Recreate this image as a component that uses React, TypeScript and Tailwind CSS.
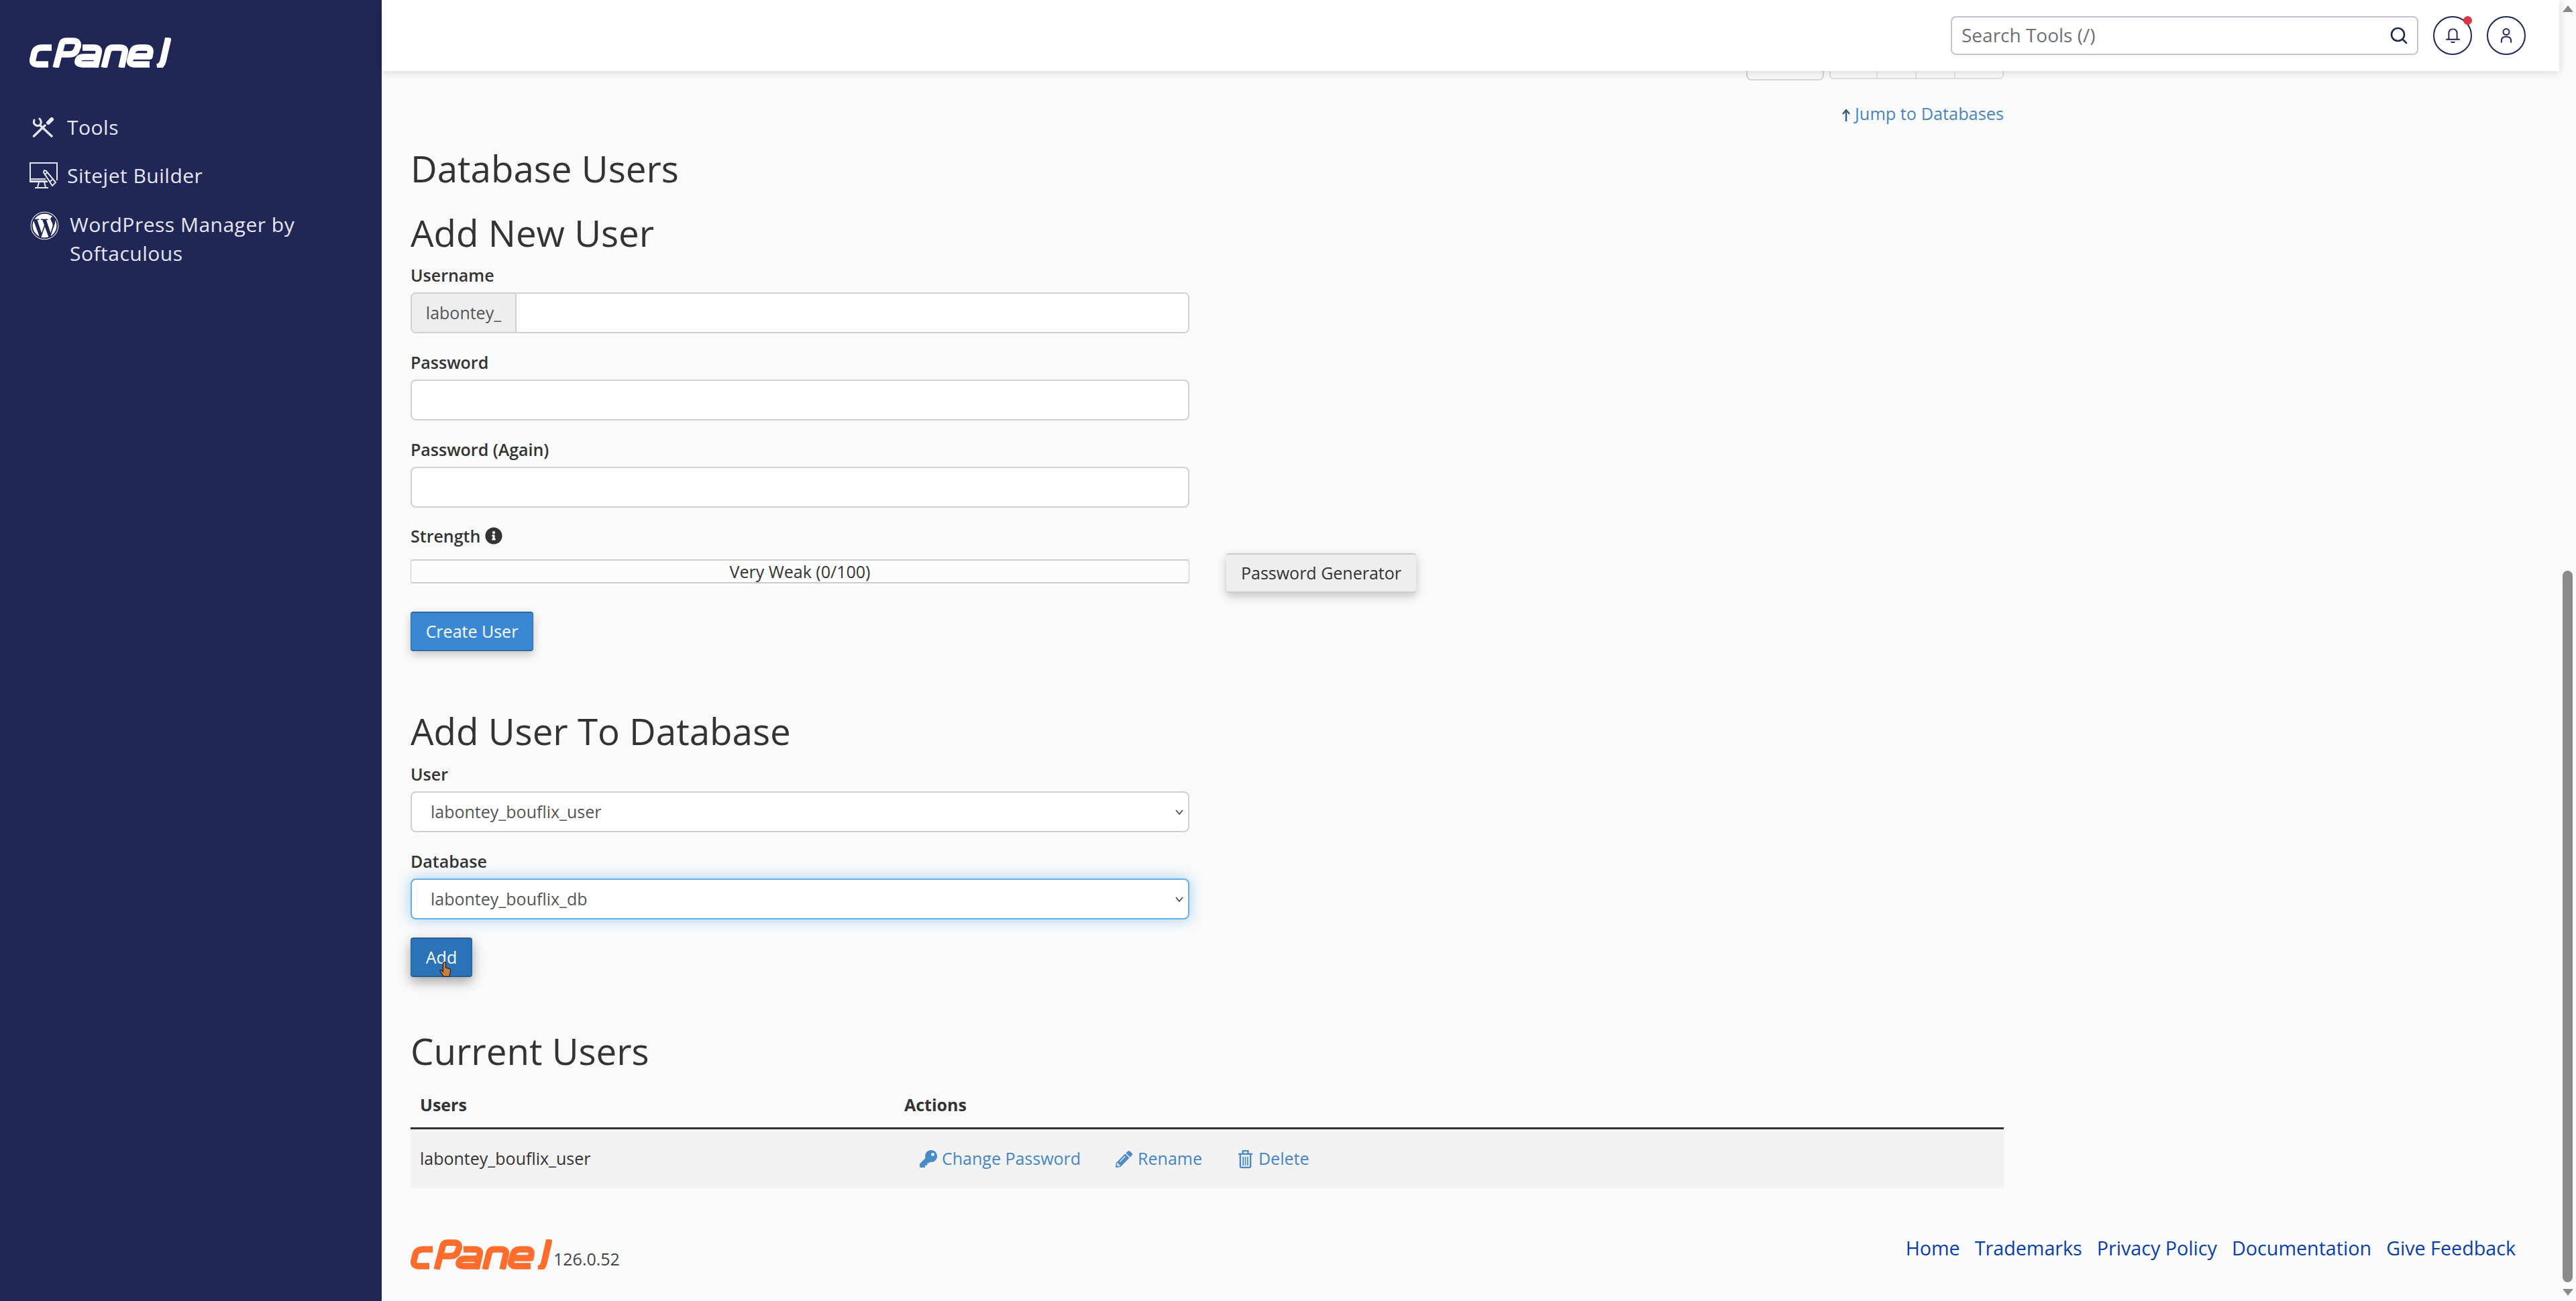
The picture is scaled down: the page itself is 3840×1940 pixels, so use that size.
import React from "react";
import { FaWordpress, FaKey, FaPencilAlt, FaInfoCircle } from "react-icons/fa";

function Logo({ color, className }: { color: string; className?: string }) {
  return (
    <svg viewBox="4 6 211 45" width="211" height="45" className={className} fill="none" stroke={color} strokeWidth="9.5" strokeLinejoin="round">
      <path d="M37 21H23Q13 21 11 29L9 38Q7 46 17 46H32" />
      <path d="M43 51L52 16Q53 11 59 11H69Q78 11 76 20L75 22Q73 31 63 31H51" />
      <path d="M83 21H100Q109 21 107 29L102 51M102 35H85Q77 35 76 41Q75 46 83 46H102" />
      <path d="M115 51L121 27Q122 21 129 21H139Q148 21 146 29L141 51" />
      <path d="M159 34H183L184 28Q185 21 177 21H167Q159 21 157 28L154 39Q152 46 161 46H183" />
      <path d="M211 6L203 41Q201 49 194 50" />
    </svg>
  );
}

function ToolsIcon() {
  return (
    <svg viewBox="0 0 32 30" width="32" height="30" fill="none" stroke="#e6e7f0" strokeWidth="3.4" strokeLinecap="round">
      <path d="M2.500 28L19 12" />
      <path d="M24 8L29 3" strokeWidth="6" />
      <path d="M29 28L13 13" />
      <path d="M3 4Q1 10 6 12Q11 14 13 9Q14 5 11 2" strokeWidth="3" />
    </svg>
  );
}

function SitejetIcon() {
  return (
    <svg viewBox="0 0 42 39" width="42" height="39" fill="none" stroke="#e6e7f0" strokeWidth="2">
      <path d="M27 29H1V1H41V27" />
      <path d="M1 25H24M1 28H26" />
      <path d="M14 30L12 37M22 30L24 37M8 38H28" />
      <path d="M21 15L22 12L25 13L39 30L34 35Z" strokeWidth="2" fill="#202655" />
      <path d="M23 18L27 15M34 26L30 29" />
    </svg>
  );
}

function NavRow({ icon, label }: { icon: React.ReactNode; label: string }) {
  return (
    <div className="flex h-[43px] items-center">
      <div className="flex w-[56px] shrink-0 justify-start">{icon}</div>
      <span>{label}</span>
    </div>
  );
}

function FieldLabel({ children, className = "" }: { children: React.ReactNode; className?: string }) {
  return <div className={`h-[34px] text-[25px] leading-[34px] font-semibold text-[#333] ${className}`}>{children}</div>;
}

const inputClass = "block h-[61px] w-[1161px] rounded-[8px] border-2 border-[#d0d0d0] bg-white";
const selectClass = "block h-[61px] w-[1161px] appearance-none rounded-[8px] border-2 bg-white pl-[28px] pr-[4px] text-[25px] text-[#555] outline-none";
const headingClass = "h-[70px] text-[54.7px] leading-[70px] font-normal text-[#333]";

function Chevron() {
  return (
    <svg viewBox="0 0 12 8" width="12" height="8" className="pointer-events-none absolute right-[9px] top-[27px]" fill="none" stroke="#444" strokeWidth="1.6">
      <path d="M1 1L6 7L11 1" />
    </svg>
  );
}

function TrashIcon() {
  return (
    <svg viewBox="0 0 24 30" width="23" height="29" fill="none" stroke="#4a8ac9" strokeWidth="2.4">
      <path d="M1 7H23" />
      <path d="M8 7V2H16V7" />
      <path d="M4 7V26Q4 28 6 28H18Q20 28 20 26V7" />
      <path d="M8.500 11V25M12 11V25M15.500 11V25" strokeWidth="1.8" />
    </svg>
  );
}

function Cursor() {
  return (
    <svg viewBox="0 0 18 24" width="18" height="24" className="absolute left-[43px] top-[36px]">
      <path d="M7 1Q9 0 9.500 2V9L15 10.500Q17 11 16.500 14L15 22H6L1 14Q1 11.500 3.500 13L5.500 15V2Q5.500 1 7 1Z" fill="#c9803e" stroke="#2a1a10" strokeWidth="1.2" />
    </svg>
  );
}

export default function App() {
  return (
    <div className="flex h-[1940px] w-[3840px] overflow-hidden bg-[#fafafa] font-['Open_Sans',sans-serif] text-[25px] text-[#333]">
      <aside className="flex w-[569px] shrink-0 flex-col bg-[#202655] pl-[44px] pt-[56px] text-[30px] leading-[43px] tracking-[0.5px] text-[#e6e7f0]">
        <Logo color="#ffffff" />
        <div className="mt-[67px]">
          <NavRow icon={<div className="ml-[4px]"><ToolsIcon /></div>} label="Tools" />
        </div>
        <div className="mt-[29px]">
          <NavRow icon={<SitejetIcon />} label="Sitejet Builder" />
        </div>
        <div className="mt-[30px] flex">
          <div className="w-[60px] shrink-0">
            <FaWordpress className="ml-[1px] mt-[2px] h-[43px] w-[43px]" color="#ffffff" />
          </div>
          <div className="w-[400px]">WordPress Manager by<br />Softaculous</div>
        </div>
      </aside>

      <div className="relative flex min-w-0 flex-1 flex-col">
        <header className="relative z-10 flex h-[106px] shrink-0 items-center justify-end bg-white pr-[50px] shadow-[0_2px_12px_rgba(0,0,0,0.14)]">
          <div className="flex h-[58px] w-[697px] items-center justify-between rounded-[8px] border-2 border-[#c4c4cc] bg-white pl-[14px] pr-[14px]">
            <span className="mt-[-3px] text-[28px] text-[#6f6f6f]">Search Tools (/)</span>
            <svg viewBox="0 0 26 26" width="26" height="26" fill="none" stroke="#1f2d45" strokeWidth="2.6" strokeLinecap="round">
              <circle cx="11.500" cy="11.500" r="9.500" />
              <path d="M18.500 18.500L24 24" />
            </svg>
          </div>
          <div className="relative ml-[22px] flex h-[58px] w-[58px] items-center justify-center rounded-full border-2 border-[#20265a]">
            <svg viewBox="0 0 24 26" width="21" height="24" fill="none" stroke="#20265a" strokeWidth="2.2" strokeLinecap="round">
              <path d="M5 19V9.500Q5 2 12 2Q19 2 19 9.500V19" />
              <path d="M1 19.500H23" />
              <path d="M9.500 24.500H14.500" />
            </svg>
            <span className="absolute right-[-2px] top-[-2px] h-[13px] w-[13px] rounded-full bg-[#dc3545]" />
          </div>
          <div className="ml-[22px] flex h-[58px] w-[58px] items-center justify-center rounded-full border-2 border-[#20265a]">
            <svg viewBox="0 0 20 26" width="18" height="24" fill="none" stroke="#20265a" strokeWidth="2.2" strokeLinecap="round">
              <circle cx="10" cy="7" r="5" />
              <path d="M2 24V22Q2 15 10 15Q18 15 18 22V24" />
            </svg>
          </div>
        </header>

        <main className="flex min-h-0 flex-1 flex-col pl-[43px]">
          <div className="flex h-[14px] w-[2375px] justify-end">
            <div className="h-[14px] w-[116px] rounded-b-[8px] border-2 border-t-0 border-[#d4d4d4]" />
            <div className="ml-[8px] flex h-[12px] w-[260px] rounded-b-[6px] border-2 border-t-0 border-[#e0e0e0]">
              <div className="w-[70px] border-r-2 border-[#e4e4e4]" />
              <div className="w-[58px] border-r-2 border-[#e4e4e4]" />
              <div className="w-[58px] border-r-2 border-[#e4e4e4]" />
            </div>
          </div>
          <div className="mt-[33px] flex h-[34px] w-[2375px] items-center justify-end text-[25.3px] text-[#4686c4]">
            <svg viewBox="0 0 14 20" width="14" height="20" className="mr-[6px] mt-[3px]" fill="none" stroke="#2f5f7a" strokeWidth="2.4">
              <path d="M7 19V3" />
              <path d="M2 8L7 2L12 8" />
            </svg>
            <span>Jump to Databases</span>
          </div>

          <h1 className={`mt-[29px] ${headingClass}`}>Database Users</h1>
          <h2 className={`mt-[26px] ${headingClass}`}>Add New User</h2>

          <FieldLabel className="mt-[11px]">Username</FieldLabel>
          <div className="mt-[9px] flex h-[61px] w-[1161px] overflow-hidden rounded-[8px] border-2 border-[#d0d0d0] bg-white">
            <div className="flex w-[156px] shrink-0 items-center justify-center border-r-2 border-[#d0d0d0] bg-[#eee] text-[25px] text-[#555]">labontey_</div>
            <input aria-label="Username" className="min-w-0 flex-1 bg-white outline-none" />
          </div>

          <FieldLabel className="mt-[26px]">Password</FieldLabel>
          <input aria-label="Password" type="password" className={`mt-[9px] ${inputClass}`} />

          <FieldLabel className="mt-[26px]">Password (Again)</FieldLabel>
          <input aria-label="Password again" type="password" className={`mt-[9px] ${inputClass}`} />

          <FieldLabel className="mt-[25px] flex items-center">
            Strength
            <FaInfoCircle className="ml-[7px] h-[26px] w-[26px]" color="#333333" />
          </FieldLabel>

          <div className="mt-[9px] flex h-[59px] items-start">
            <div className="mt-[9px] flex h-[36px] w-[1161px] items-center justify-center rounded-[4px] border-y-2 border-x border-[#ccc] bg-[#fcfcfc] text-[25px] leading-[32px] text-[#333]">Very Weak (0/100)</div>
            <button className="ml-[55px] h-[59px] w-[283px] rounded-[4px] border-y-2 border-[#ccc] bg-[#eee] text-[25px] text-[#333] shadow-[0_5px_14px_rgba(0,0,0,0.22)]">Password Generator</button>
          </div>

          <button className="mt-[28px] h-[59px] w-[183px] rounded-[4px] border-y-2 border-x border-[#2e6da4] bg-[#3a87d3] text-[25px] text-white shadow-[0_5px_14px_rgba(0,0,0,0.22)]">Create User</button>

          <h2 className={`mt-[84px] ${headingClass}`}>Add User To Database</h2>

          <FieldLabel className="mt-[12px]">User</FieldLabel>
          <div className="relative mt-[9px] w-[1161px]">
            <select defaultValue="labontey_bouflix_user" aria-label="User" className={`border-[#d0d0d0] ${selectClass}`}>
              <option>labontey_bouflix_user</option>
            </select>
            <Chevron />
          </div>

          <FieldLabel className="mt-[26px]">Database</FieldLabel>
          <div className="relative mt-[9px] w-[1161px]">
            <select defaultValue="labontey_bouflix_db" aria-label="Database" className={`border-[#66afe9] shadow-[0_0_20px_rgba(102,175,233,0.6)] ${selectClass}`}>
              <option>labontey_bouflix_db</option>
            </select>
            <Chevron />
          </div>

          <div className="relative mt-[27px] h-[59px] w-[92px]">
            <button className="h-[59px] w-[92px] rounded-[4px] border-y-2 border-x border-[#255f94] bg-[#2a73b8] text-[25px] text-white shadow-[0_7px_18px_rgba(0,0,0,0.35)]">Add</button>
            <Cursor />
          </div>

          <h2 className={`mt-[75px] ${headingClass}`}>Current Users</h2>

          <div className="mt-[2px] w-[2375px]">
            <div className="flex h-[80px] items-center border-b-[3px] border-[#333] pt-[11px] text-[25px] font-bold text-[#333]">
              <div className="w-[736px] pl-[14px]">Users</div>
              <div>Actions</div>
            </div>
            <div className="flex h-[88px] items-center bg-[#f2f2f2] text-[25px] text-[#333]">
              <div className="w-[736px] pl-[14px]">labontey_bouflix_user</div>
              <div className="flex items-center pl-[23px] text-[#4686c4]">
                <FaKey className="h-[26px] w-[26px]" color="#4a8ac9" />
                <span className="ml-[7px]">Change Password</span>
                <FaPencilAlt className="ml-[52px] h-[25px] w-[25px]" color="#4a8ac9" />
                <span className="ml-[8px]">Rename</span>
                <span className="ml-[53px]"><TrashIcon /></span>
                <span className="ml-[8px]">Delete</span>
              </div>
            </div>
          </div>

          <footer className="mt-[76px] flex w-[3138px] items-start justify-between">
            <div className="flex items-end">
              <Logo color="#ff6c2c" />
              <span className="mb-[-1px] ml-[2px] text-[25px] leading-[34px] text-[#444]">126.0.52</span>
            </div>
            <nav className="mt-[-6px] flex gap-[22px] text-[28.7px] leading-[38px] text-[#0b3fa5]">
              <span>Home</span>
              <span>Trademarks</span>
              <span>Privacy Policy</span>
              <span>Documentation</span>
              <span>Give Feedback</span>
            </nav>
          </footer>
        </main>
      </div>

      <div className="flex w-[25px] shrink-0 flex-col items-center bg-[#fafafa] pt-[8px]">
        <div className="h-0 w-0 border-x-[8px] border-b-[10px] border-x-transparent border-b-[#8a8a8a]" />
        <div className="mt-[833px] h-[1061px] w-[15px] rounded-[8px] bg-[#8a8a8a]" />
        <div className="mt-[10px] h-0 w-0 border-x-[8px] border-t-[10px] border-x-transparent border-t-[#8a8a8a]" />
      </div>
    </div>
  );
}
